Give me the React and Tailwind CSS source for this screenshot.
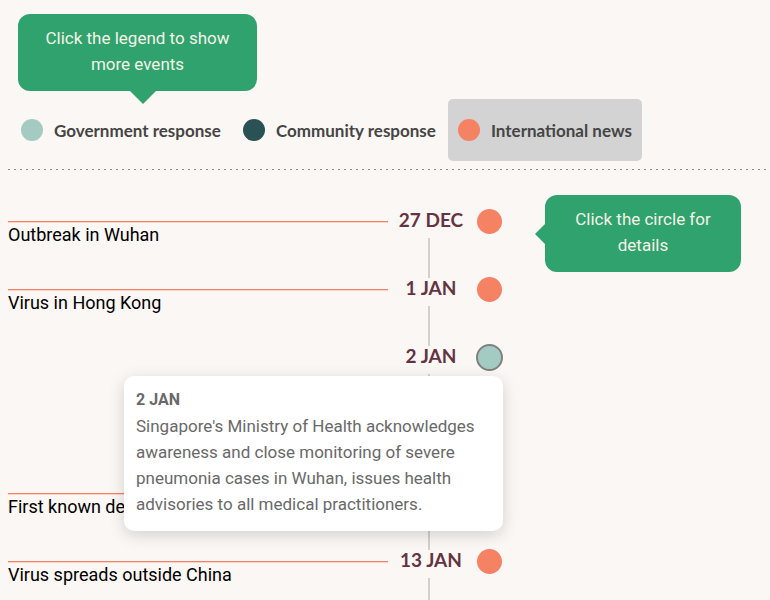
import React, { useState } from "react";
import clsx from "clsx";

const LEGEND = [
  { id: "government", label: "Government response", dot: "bg-[#a3cbc2]" },
  { id: "community", label: "Community response", dot: "bg-[#2a5154]" },
  { id: "international", label: "International news", dot: "bg-[#f58263]" },
];

const EVENTS = [
  { id: "wuhan", date: "27 DEC", title: "Outbreak in Wuhan", hint: true },
  { id: "hongkong", date: "1 JAN", title: "Virus in Hong Kong" },
  {
    id: "ministry",
    date: "2 JAN",
    government: true,
    details:
      "Singapore's Ministry of Health acknowledges awareness and close monitoring of severe pneumonia cases in Wuhan, issues health advisories to all medical practitioners.",
  },
  { id: "gap" },
  { id: "death", title: "First known death" },
  { id: "china", date: "13 JAN", title: "Virus spreads outside China" },
];

function Connector({ className }) {
  return <div className={clsx("w-0.5", className)} />;
}

function Hint({ className, arrowClassName, children }) {
  return (
    <div
      className={clsx(
        "rounded-xl bg-[#2fa26e] pb-3.5 pt-[11px] text-center text-[17px] leading-[26px] text-[#f5f3e6]",
        className
      )}
    >
      {children}
      <span className={clsx("absolute bg-[#2fa26e]", arrowClassName)} />
    </div>
  );
}

function Legend({ active, onSelect }) {
  return (
    <div className="flex gap-0.5 pl-[3px] pt-2">
      {LEGEND.map((item) => (
        <button
          key={item.id}
          type="button"
          aria-pressed={active === item.id}
          onClick={() => onSelect(item.id)}
          className={clsx(
            "flex h-[62px] items-center gap-[11px] rounded-[5px] px-2.5 font-['Lato',sans-serif] text-[17px] font-bold text-[#454545]",
            active === item.id && "bg-[#d3d3d3]"
          )}
        >
          <span className={clsx("size-[22px] rounded-full", item.dot)} />
          <span className="pt-0.5">{item.label}</span>
        </button>
      ))}
    </div>
  );
}

function Event({ event, first, open, onToggle }) {
  return (
    <li className="grid h-[68px] grid-cols-2">
      <div className="pr-px pt-[34px]">
        {event.title && (
          <p className="border-t border-[#f58263] text-lg leading-[25px] text-black shadow-[inset_0_1px_#fad3c8]">
            {event.title}
          </p>
        )}
      </div>
      <div className="relative flex">
        <div className="flex w-20 flex-col items-center">
          <Connector className={clsx("h-[23px]", !first && "bg-[#d3d0cd]")} />
          <time className="h-7 whitespace-nowrap pl-1 font-['Lato',sans-serif] text-[19px] font-bold leading-5 text-[#653443]">
            {event.date}
          </time>
          <Connector className="flex-1 bg-[#d3d0cd]" />
        </div>
        {event.date && (
          <div className="relative ml-[7px] flex size-[27px] items-center justify-center self-center">
            <button
              type="button"
              aria-label={`Details for ${event.date}`}
              aria-expanded={open}
              onClick={onToggle}
              className={clsx(
                "rounded-full",
                event.government ? "bg-[#a3cbc2]" : "bg-[#f58263]",
                open ? "size-[27px] border-2 border-[#808080]" : "size-[25px]"
              )}
            />
            {open && event.details && (
              <div
                role="tooltip"
                className="absolute right-0 top-full z-10 mt-[5px] w-[379px] rounded-[10px] bg-white px-3 pb-3.5 pt-[11px] text-[17px] leading-[26px] text-[#696969] shadow-[0_4px_16px_rgba(0,0,0,0.16)]"
              >
                <strong className="block text-base leading-[26px]">{event.date}</strong>
                {event.details}
              </div>
            )}
          </div>
        )}
        {event.hint && (
          <Hint
            className="absolute left-[156px] top-2 w-[196px] px-5"
            arrowClassName="right-full top-[29px] h-5 w-2.5 [clip-path:polygon(100%_0,100%_100%,0_50%)]"
          >
            Click the circle for details
          </Hint>
        )}
      </div>
    </li>
  );
}

export default function App() {
  const [active, setActive] = useState("international");
  const [openId, setOpenId] = useState("ministry");

  return (
    <main className="flex min-h-screen flex-col bg-[#fbf7f4] pl-2 font-['Roboto',sans-serif]">
      <header className="pt-3.5">
        <Hint
          className="relative ml-2.5 w-[239px] px-6"
          arrowClassName="left-28 top-full h-[13px] w-[26px] [clip-path:polygon(0_0,100%_0,50%_100%)]"
        >
          Click the legend to show more events
        </Hint>
        <Legend active={active} onSelect={setActive} />
        <div className="mt-2 h-px bg-[repeating-linear-gradient(to_right,#8f8c8a_0_2px,transparent_2px_6px)]" />
      </header>
      <ol className="pt-[17px]">
        {EVENTS.map((event, index) => (
          <Event
            key={event.id}
            event={event}
            first={index === 0}
            open={openId === event.id}
            onToggle={() => setOpenId(openId === event.id ? null : event.id)}
          />
        ))}
      </ol>
      <div className="grid flex-1 grid-cols-2">
        <div />
        <div className="flex w-20 justify-center">
          <Connector className="bg-[#d3d0cd]" />
        </div>
      </div>
    </main>
  );
}
